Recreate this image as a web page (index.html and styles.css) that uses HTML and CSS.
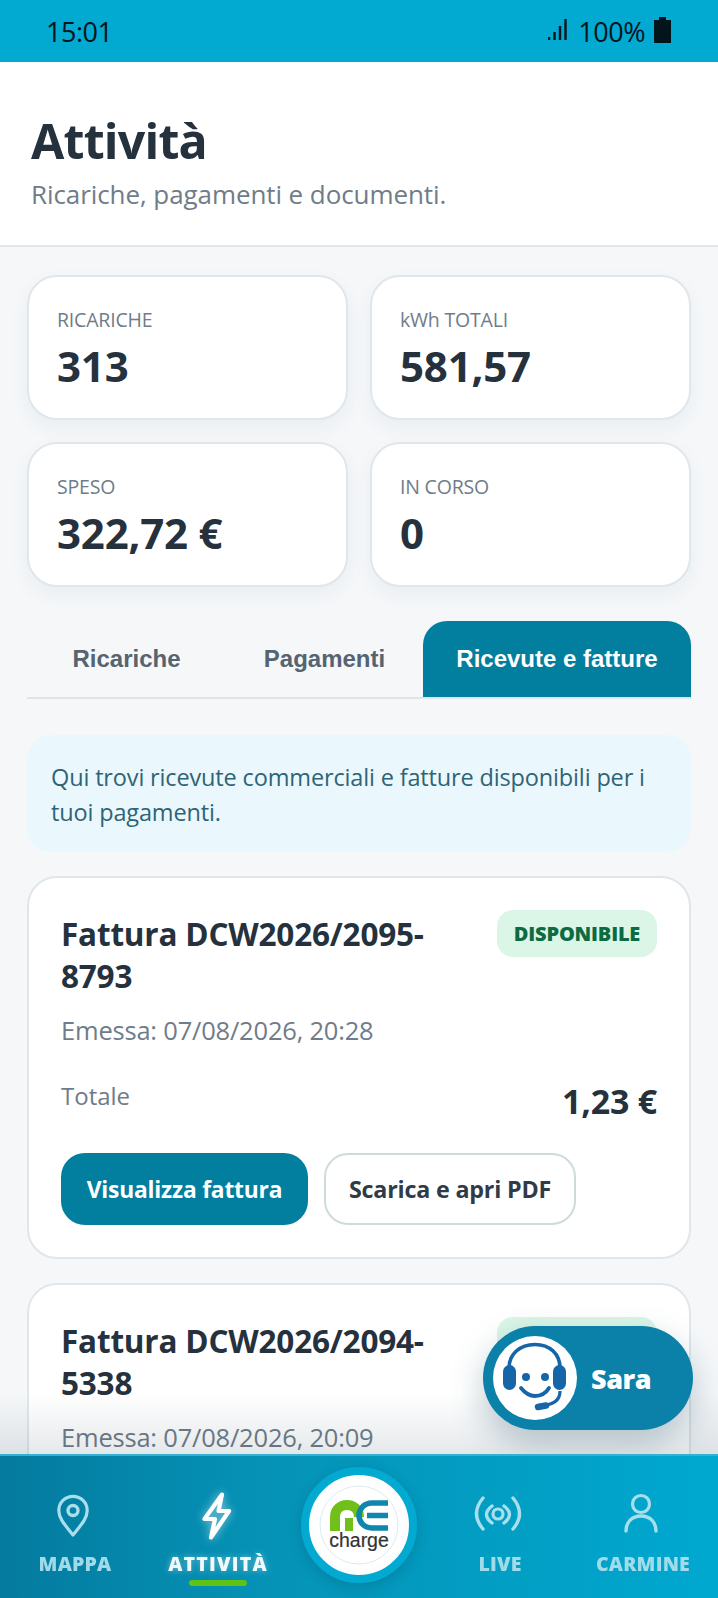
FILE: index.html
```html
<!DOCTYPE html>
<html lang="it">
<head>
<meta charset="utf-8">
<title>Attività</title>
<link rel="stylesheet" href="styles.css">
</head>
<body>
<div class="app">
  <div class="status">
    <span class="status-time">15:01</span>
    <div class="status-right">
      <svg class="signal" width="22" height="24" viewBox="0 0 22 24"><path d="M1 22v-3M6.500 22v-8M12 22V8M17.500 22V1" stroke="#04141c" stroke-width="2.400" fill="none"/></svg>
      <span class="status-pct">100%</span>
      <svg class="battery" width="17" height="26" viewBox="0 0 17 26"><path d="M5 0h7v3h5v23H0V3h5z" fill="#04141c"/></svg>
    </div>
  </div>
  <header class="head">
    <h1 class="head-title">Attività</h1>
    <p class="head-sub">Ricariche, pagamenti e documenti.</p>
  </header>
  <main class="scroll">
    <section class="stats">
      <div class="stat"><div class="stat-label">RICARICHE</div><div class="stat-value">313</div></div>
      <div class="stat"><div class="stat-label">kWh TOTALI</div><div class="stat-value">581,57</div></div>
      <div class="stat"><div class="stat-label">SPESO</div><div class="stat-value">322,72 €</div></div>
      <div class="stat"><div class="stat-label">IN CORSO</div><div class="stat-value">0</div></div>
    </section>
    <nav class="tabs">
      <div class="tab">Ricariche</div>
      <div class="tab">Pagamenti</div>
      <div class="tab tab-active">Ricevute e fatture</div>
    </nav>
    <p class="info">Qui trovi ricevute commerciali e fatture disponibili per i tuoi pagamenti.</p>
    <article class="card">
      <div class="card-top">
        <h2 class="card-title">Fattura DCW2026/2095-8793</h2>
        <span class="badge">DISPONIBILE</span>
      </div>
      <div class="card-date">Emessa: 07/08/2026, 20:28</div>
      <div class="card-total"><span class="total-label">Totale</span><span class="total-value">1,23 €</span></div>
      <div class="card-actions">
        <button class="btn btn-primary">Visualizza fattura</button>
        <button class="btn btn-ghost">Scarica e apri PDF</button>
      </div>
    </article>
    <article class="card">
      <div class="card-top">
        <h2 class="card-title">Fattura DCW2026/2094-5338</h2>
        <span class="badge">DISPONIBILE</span>
      </div>
      <div class="card-date">Emessa: 07/08/2026, 20:09</div>
    </article>
    <div class="fade"></div>
    <div class="sara">
      <span class="sara-face">
        <svg width="84" height="84" viewBox="0 0 84 84" fill="none">
          <path d="M16 32C16 18 27 8.500 42 8.500S67 18 67 32" stroke="#1565a8" stroke-width="3.600"/>
          <rect x="10" y="29" width="13" height="25" rx="6.500" fill="#1565a8"/>
          <rect x="60" y="29" width="13" height="25" rx="6.500" fill="#1565a8"/>
          <circle cx="33" cy="41" r="4" fill="#1565a8"/>
          <circle cx="52" cy="41" r="4" fill="#1565a8"/>
          <path d="M28 52c4 5 8 8 14 8s11-3 14-8" stroke="#1565a8" stroke-width="3.800" stroke-linecap="round"/>
          <path d="M67 55c0 9-6 13-15 14" stroke="#1565a8" stroke-width="3.200"/>
          <path d="M45 71l8-1.500" stroke="#1565a8" stroke-width="6.500" stroke-linecap="round"/>
        </svg>
      </span>
      <span class="sara-name">Sara</span>
    </div>
  </main>
  <footer class="bar">
    <div class="bar-item">
      <svg class="bar-icon" width="48" height="48" viewBox="0 0 48 48" fill="none"><path d="M24 43C16 33 9.800 26.500 9.800 18.500a14.200 14.200 0 0 1 28.400 0C38.200 26.500 32 33 24 43z" stroke="currentColor" stroke-width="3.200" stroke-linejoin="round"/><circle cx="24" cy="18.500" r="5" stroke="currentColor" stroke-width="3.400"/></svg>
      <span class="bar-label">MAPPA</span>
    </div>
    <div class="bar-item bar-active">
      <svg class="bar-icon" width="48" height="48" viewBox="0 0 48 48" fill="none"><path d="M30 2.500 12.500 27H23l-4 18.500L37 19H26.500z" stroke="currentColor" stroke-width="4.200" stroke-linejoin="round"/></svg>
      <span class="bar-label">ATTIVITÀ</span>
      <span class="bar-mark"></span>
    </div>
    <div class="bar-logo">
      <span class="logo-ring">
        <svg class="logo-art" width="100" height="100" viewBox="0 0 100 100" fill="none">
          <circle cx="50" cy="50" r="39" stroke="#dcebef" stroke-width="1"/>
          <path d="M26 56V42c0-8 6-12 12-12s12 4 12 12" stroke="#71bf1a" stroke-width="10"/>
          <path d="M40 56V43" stroke="#71bf1a" stroke-width="8"/>
          <path d="M79 28H63c-8 0-13 6-13 12.500S55 53 63 53h16M58 40.500h21" stroke="#0e86ad" stroke-width="5.500"/>
        </svg>
        <span class="logo-word">charge</span>
      </span>
    </div>
    <div class="bar-item">
      <svg class="bar-icon" width="48" height="48" viewBox="0 0 48 48" fill="none"><circle cx="24" cy="22" r="5" stroke="currentColor" stroke-width="3.200"/><path d="M18 14Q7 22.500 18 31M30 14Q41 22.500 30 31M9 6Q-4 21.500 9 37M39 6Q52 21.500 39 37" stroke="currentColor" stroke-width="3.400" stroke-linecap="round"/></svg>
      <span class="bar-label">LIVE</span>
    </div>
    <div class="bar-item">
      <svg class="bar-icon" width="48" height="48" viewBox="0 0 48 48" fill="none"><circle cx="24" cy="12" r="8.500" stroke="currentColor" stroke-width="3.200"/><path d="M9 39c0-9 6-15 15-15s15 6 15 15" stroke="currentColor" stroke-width="3.400" stroke-linecap="round"/></svg>
      <span class="bar-label">CARMINE</span>
    </div>
  </footer>
</div>
</body>
</html>
```
FILE: styles.css
```css
* { box-sizing: border-box; }
html, body { margin: 0; padding: 0; }
body { font-family: "Open Sans", "Noto Sans", sans-serif; color: #25313c; background: #f5f7f9; }
.app { width: 718px; height: 1598px; display: flex; flex-direction: column; overflow: hidden; }

.status { height: 62px; flex: none; background: #02a9d1; color: #04141c; display: flex; justify-content: space-between; align-items: center; padding: 0 47px 0 46px; font-size: 27px; letter-spacing: -0.5px; }
.status-right { display: flex; align-items: center; gap: 9px; }
.signal { margin-right: -1px; margin-bottom: 2px; }
.battery { margin-bottom: 2px; }

.head { flex: none; height: 185px; background: #fff; border-bottom: 2px solid #e3e7ea; padding: 47px 31px 0; }
.head-title { margin: 0; font-size: 48.300px; line-height: 62px; font-weight: 700; letter-spacing: -0.8px; color: #25313c; }
.head-sub { margin: 6px 0 0; font-size: 26px; line-height: 34px; color: #6f7c89; letter-spacing: -0.08px; }

.scroll { flex: 1; min-height: 0; position: relative; overflow: hidden; padding: 28px 27px 0; }
.stats { display: grid; grid-template-columns: 1fr 1fr; gap: 22px; }
.stat { height: 145px; background: #fff; border: 2px solid #dfe7ea; border-radius: 30px; padding: 30px 28px 0; box-shadow: 0 8px 20px rgba(40, 70, 90, .05); }
.stat-label { font-size: 19.500px; line-height: 26px; color: #6f7c89; letter-spacing: -0.2px; }
.stat-value { font-size: 42px; line-height: 52px; font-weight: 700; margin-top: 7px; color: #25313c; letter-spacing: -0.2px; }

.tabs { display: grid; grid-template-columns: 197px 199px 1fr; height: 78px; margin-top: 34px; border-bottom: 2px solid #dde5e9; }
.tab { font-family: "Liberation Sans", Arial, sans-serif; font-weight: 700; font-size: 24px; color: #566370; display: flex; align-items: center; justify-content: center; height: 76px; padding-left: 2px; }
.tab-active { background: #027e9f; color: #fff; border-radius: 24px 24px 0 0; padding-left: 0; }

.info { margin: 36px 0 0; height: 117px; background: #eaf8fd; border-radius: 24px; padding: 25px 24px 0; font-size: 23.500px; line-height: 35px; color: #2f6475; letter-spacing: -0.15px; }

.card { background: #fff; border: 2px solid #dfe7ea; border-radius: 30px; margin-top: 24px; height: 383px; padding: 32px 32px 0; }
.card-top { display: flex; justify-content: space-between; align-items: flex-start; }
.card-title { margin: 3px 0 0; width: 400px; font-size: 31.500px; line-height: 42px; font-weight: 700; color: #25313c; letter-spacing: -0.2px; }
.badge { height: 47px; width: 160px; flex: none; display: flex; align-items: center; justify-content: center; background: #dbf6e7; color: #0c6b43; border-radius: 16px; font-size: 20px; font-weight: 800; letter-spacing: -0.2px; }
.card-date { margin-top: 13px; font-size: 25.500px; line-height: 40px; color: #6f7c89; letter-spacing: -0.2px; }
.card-total { display: flex; justify-content: space-between; align-items: flex-start; margin-top: 26px; }
.total-label { font-size: 24px; line-height: 40px; color: #6f7c89; }
.total-value { font-size: 34px; line-height: 44px; font-weight: 700; margin-top: 3px; color: #25313c; letter-spacing: -0.2px; }
.card-actions { display: flex; gap: 16px; margin-top: 30px; }
.btn { font-family: inherit; height: 72px; border-radius: 24px; font-size: 22.800px; font-weight: 700; padding: 0; letter-spacing: -0.2px; }
.btn-primary { width: 247px; background: #027e9f; color: #fff; border: none; }
.btn-ghost { width: 252px; background: #fff; color: #2f3b47; border: 2px solid #cfdadd; font-size: 23.300px; }

.fade { position: absolute; left: 0; right: 0; bottom: 0; height: 60px; background: linear-gradient(to bottom, rgba(20, 50, 70, 0), rgba(20, 50, 70, .11)); }
.sara { position: absolute; left: 483px; bottom: 24px; width: 210px; height: 104px; border-radius: 52px; background: #0b80a8; display: flex; align-items: center; padding-left: 10px; gap: 14px; box-shadow: 0 14px 34px rgba(20, 70, 95, .28); }
.sara-face { width: 84px; height: 84px; border-radius: 50%; background: #fff; display: block; flex: none; }
.sara-face svg { display: block; }
.sara-name { color: #fff; font-size: 27px; font-weight: 800; letter-spacing: -0.4px; }

.bar { flex: none; height: 144px; border-top: 2px solid #35b0cf; background: linear-gradient(90deg, #047b9f 0%, #0594b8 40%, #00a8d0 100%); display: grid; grid-template-columns: 143px 143px 1fr 143px 143px; padding: 0 3.500px; }
.bar-item { position: relative; display: flex; flex-direction: column; align-items: center; color: #a9dfec; padding-top: 36px; }
.bar-icon { display: block; margin-left: -4px; }
.bar-label { font-size: 19.500px; line-height: 26px; font-weight: 800; margin-top: 11px; letter-spacing: .2px; opacity: .95; }
.bar-active { color: #fff; }
.bar-active .bar-icon { filter: drop-shadow(0 0 5px rgba(255, 255, 255, .55)); }
.bar-active .bar-label { text-shadow: 0 0 6px rgba(255, 255, 255, .45); letter-spacing: 1.200px; }
.bar-mark { width: 58px; height: 6px; border-radius: 3px; background: #5fc216; margin-top: 3px; }
.bar-logo { display: flex; align-items: center; justify-content: center; padding-bottom: 4px; }
.logo-ring { position: relative; width: 116px; height: 116px; border-radius: 50%; border: 8px solid #02a9d1; background: radial-gradient(circle, #fff 60%, #f2f4f5); display: block; box-shadow: 0 4px 14px rgba(0, 50, 70, .2); flex: none; }
.logo-art { display: block; }
.logo-word { position: absolute; left: 0; right: 0; top: 54px; text-align: center; font-family: "Liberation Sans", Arial, sans-serif; font-size: 19.500px; line-height: 22px; color: #333; -webkit-text-stroke: .2px #333; }
```
